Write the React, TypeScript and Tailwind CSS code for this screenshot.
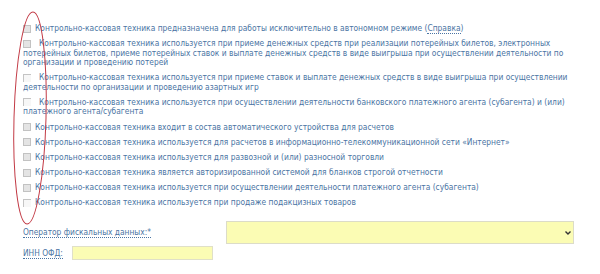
const items: { text: React.ReactNode; flat?: boolean; wide?: boolean }[] = [
  {
    text: (
      <>
        Контрольно-кассовая техника предназначена для работы исключительно в автономном режиме (
        <span className="border-b border-dotted border-[#4a74a3]">Справка</span>)
      </>
    ),
  },
  {
    wide: true,
    text: 'Контрольно-кассовая техника используется при приеме денежных средств при реализации потерейных билетов, электронных потерейных билетов, приеме потерейных ставок и выплате денежных средств в виде выигрыша при осуществлении деятельности по организации и проведению потерей',
  },
  {
    wide: true,
    flat: true,
    text: 'Контрольно-кассовая техника используется при приеме ставок и выплате денежных средств в виде выигрыша при осуществлении деятельности по организации и проведению азартных игр',
  },
  {
    wide: true,
    flat: true,
    text: 'Контрольно-кассовая техника используется при осуществлении деятельности банковского платежного агента (субагента) и (или) платежного агента/субагента',
  },
  { text: 'Контрольно-кассовая техника входит в состав автоматического устройства для расчетов' },
  { text: 'Контрольно-кассовая техника используется для расчетов в информационно-телекоммуникационной сети «Интернет»' },
  { text: 'Контрольно-кассовая техника используется для развозной и (или) разносной торговли' },
  { text: 'Контрольно-кассовая техника является авторизированной системой для бланков строгой отчетности' },
  { text: 'Контрольно-кассовая техника используется при осуществлении деятельности платежного агента (субагента)' },
  { flat: true, text: 'Контрольно-кассовая техника используется при продаже подакцизных товаров' },
]

function Box({ flat }: { flat?: boolean }) {
  if (flat) {
    return (
      <span className="inline-block w-[8px] h-[8px] align-[-1.5px] border-t border-l border-[#c4c4c4] bg-[#f7f7f7]" />
    )
  }
  return <span className="inline-block w-[8px] h-[8px] align-[-1.5px] border border-[#c2c2c2] bg-[#e4e4e4]" />
}

export default function App() {
  return (
    <div className="relative w-[600px] h-[274px] bg-white overflow-hidden text-[#4a74a3] font-['DejaVu_Sans_Condensed','DejaVu_Sans',sans-serif]">
      <div className="pl-[23px] pt-[24px] w-[568px] text-[8.35px] leading-[9.5px]">
        {items.map((it, i) => (
          <div key={i} className="mb-[5.67px]">
            <Box flat={it.flat} />
            <span className={it.wide ? 'ml-[8px]' : 'ml-[4px]'}>{it.text}</span>
          </div>
        ))}
      </div>

      <div className="pl-[23px] mt-[13px] text-[8.3px]">
        <div className="flex items-center h-[23px]">
          <span className="w-[203px]">
            <span className="border-b border-dotted border-[#4a74a3]">Оператор фискальных данных:*</span>
          </span>
          <div className="relative w-[348px] h-[23px] bg-[#fbfcb4] border border-[#dcdcc8]">
            <svg className="absolute right-[2px] top-[9px]" width="6" height="4" viewBox="0 0 6 4">
              <path d="M0.5 0.5 L3 3 L5.5 0.5" fill="none" stroke="#333" strokeWidth="1.4" />
            </svg>
          </div>
        </div>
        <div className="flex items-center mt-[2px] h-[14px]">
          <span className="w-[49px]">
            <span className="border-b border-dotted border-[#4a74a3]">ИНН ОФД:</span>
          </span>
          <div className="w-[141px] h-[14px] bg-[#fbfcb4] border border-[#e0e0c8]" />
        </div>
      </div>

      <svg className="absolute left-0 top-0 pointer-events-none" width="600" height="274">
        <ellipse cx="30" cy="118" rx="16" ry="106" transform="rotate(1.6 30 118)" fill="none" stroke="#c23a45" strokeWidth="1" />
      </svg>
    </div>
  )
}
